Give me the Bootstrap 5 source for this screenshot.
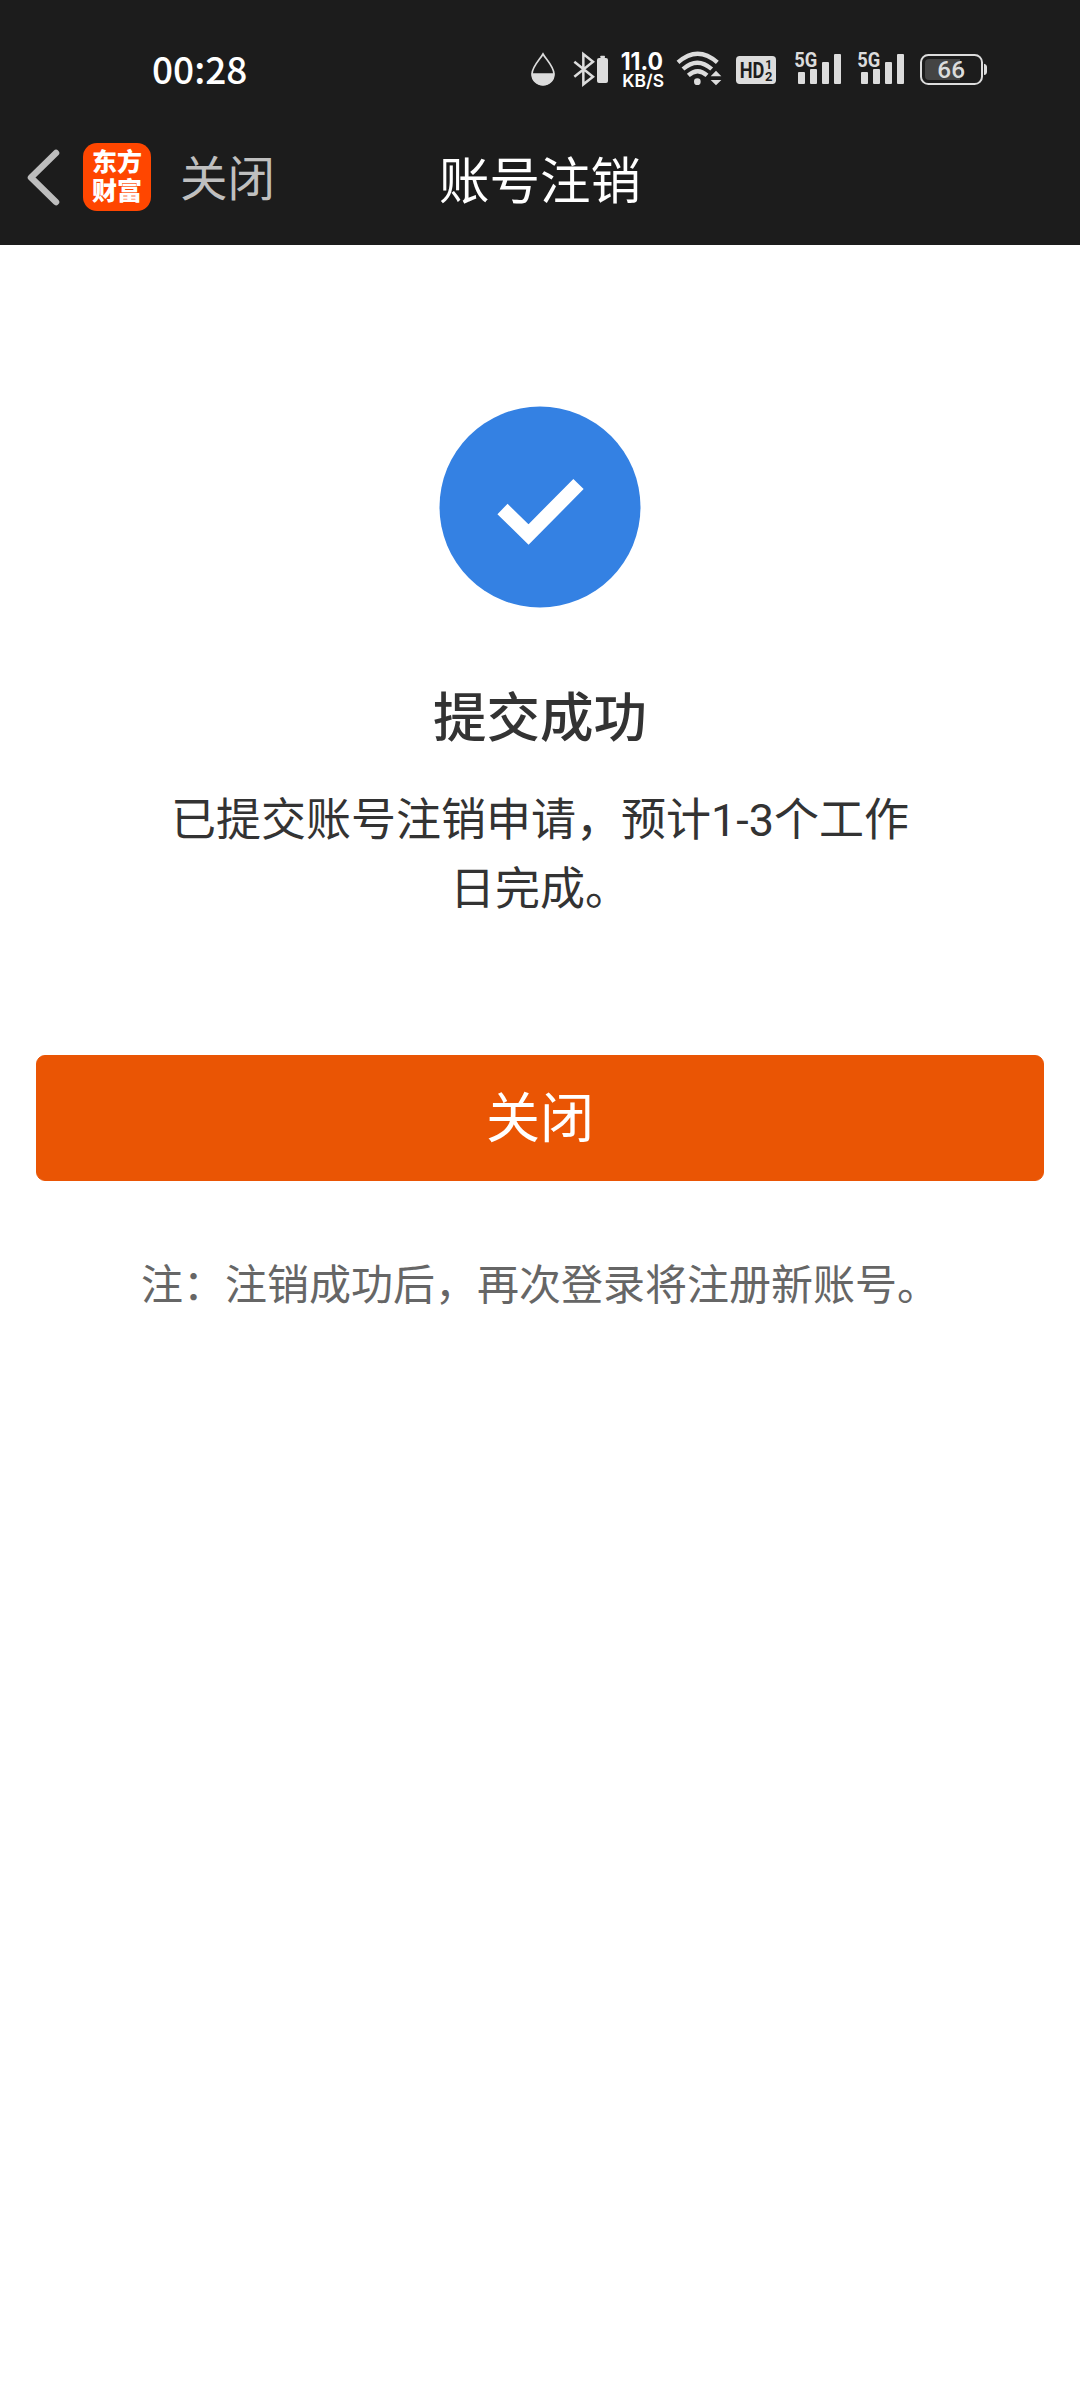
<!DOCTYPE html>
<html lang="zh-CN">
<head>
<meta charset="utf-8">
<meta name="viewport" content="width=device-width, initial-scale=1">
<title>账号注销</title>
<link href="https://cdn.jsdelivr.net/npm/bootstrap@5.3.0/dist/css/bootstrap.min.css" rel="stylesheet">
<style>
body{font-family:Roboto,"Noto Sans CJK SC",sans-serif;background:#fff;color:#333;min-height:2400px}
.top-area{background:#1c1c1c;height:245px}
.status-bar{height:140px;padding:40px 92px 40px 152px}
.clock{font:500 37px/60px "Noto Sans CJK SC",sans-serif;color:#fff;padding-bottom:5px}
.status-bar svg{height:60px;display:block;fill:#dcdcdc;font-family:Roboto,sans-serif}
.title-bar{height:105px}
.side{flex:1 1 0}
.back-icon{width:34px;height:58px;margin:8px 0 0 26px}
.app-logo{width:68px;height:68px;margin:3px 0 0 23px;border-radius:14px;background:#ff4600;color:#fff;font:900 25px/28.5px "Noto Sans CJK SC",sans-serif;padding-top:3px}
.close-link{font-size:47.5px;line-height:72px;margin:4px 0 0 29px;color:#bfbfbf;font-weight:400}
.page-name{font-size:50.5px;line-height:76px;margin-top:4px;color:#fff}
.result{padding:161px 36px 0}
.done-icon{width:202px;height:202px}
.result-title{font-size:53.5px;font-weight:500;line-height:80px;margin-top:71px}
.result-text{font-size:45px;line-height:69px;width:760px;margin-top:27px}
.btn-done{--bs-btn-bg:#ea5504;--bs-btn-color:#fff;--bs-btn-border-color:#ea5504;--bs-btn-hover-bg:#d44c02;--bs-btn-hover-color:#fff;height:126px;font-size:54px;line-height:80px;border-radius:9px;margin-top:131px;padding:10px 0 6px}
.hint{font-size:42px;line-height:64px;color:#666;margin-top:73px;white-space:nowrap}
</style>
</head>
<body>
<header class="top-area">
  <div class="status-bar d-flex align-items-center">
    <span class="clock me-auto">00:28</span>
    <!-- eye comfort drop -->
    <svg width="26" viewBox="60 0 78 180"><path d="M99 42C91 57 66 80 66 102a33 33 0 0 0 66 0C132 80 107 57 99 42Z" fill="none" stroke="#dcdcdc" stroke-width="5"/><path d="M65 100h68a34 36 0 0 1-68 0Z"/></svg>
    <!-- bluetooth with device charge -->
    <svg width="36" viewBox="189 0 108 180" style="margin-left:17px"><path d="M193 65 249 110 220 133V42l29 23L193 110" fill="none" stroke="#dcdcdc" stroke-width="7.500"/><rect x="271" y="47" width="14" height="7" rx="2"/><rect x="261" y="54" width="33" height="75" rx="6"/></svg>
    <!-- network speed -->
    <svg width="45" viewBox="330 0 135 180" style="margin-left:11px;fill:#fff;font-family:Inter,sans-serif"><text x="332" y="91" font-size="72" font-weight="700" textLength="127" lengthAdjust="spacingAndGlyphs">11.0</text><text x="337" y="142" font-size="53" font-weight="600" textLength="125" lengthAdjust="spacingAndGlyphs">KB/S</text></svg>
    <!-- wifi with traffic arrows -->
    <svg width="46" viewBox="498 0 138 180" style="margin-left:11px"><g fill="none" stroke="#dcdcdc" stroke-width="13"><path d="M504 67q59-52 118 0"/><path d="M519 87q43-38 86 0"/><path d="M535 106q28-25 56 0"/></g><circle cx="562" cy="125" r="10"/><path d="M602 109 618 92l16 17ZM602 120h32L618 136Z"/></svg>
    <svg width="42" viewBox="15 0 126 180" style="margin-left:13px"><rect x="18" y="48" width="120" height="84" rx="11"/><g fill="#1c1c1c" font-weight="700"><text x="29" y="113" font-size="66" textLength="74" lengthAdjust="spacingAndGlyphs">HD</text><text x="106" y="87" font-size="36">1</text><text x="105" y="122" font-size="39">2</text></g></svg>
    <svg width="48" viewBox="192 0 144 180" style="margin-left:17px"><text x="193" y="82" font-size="63" font-weight="700" textLength="69" lengthAdjust="spacingAndGlyphs">5G</text><rect x="204" y="96" width="21" height="36" rx="3"/><rect x="240" y="87" width="21" height="45" rx="3"/><rect x="276" y="66" width="21" height="66" rx="3"/><rect x="312" y="42" width="21" height="90" rx="3"/></svg>
    <svg width="48" viewBox="192 0 144 180" style="margin-left:15px"><text x="193" y="82" font-size="63" font-weight="700" textLength="69" lengthAdjust="spacingAndGlyphs">5G</text><rect x="204" y="96" width="21" height="36" rx="3"/><rect x="240" y="87" width="21" height="45" rx="3"/><rect x="276" y="66" width="21" height="66" rx="3"/><rect x="312" y="42" width="21" height="90" rx="3"/></svg>
    <!-- battery -->
    <svg width="69" viewBox="567 0 207 180" style="margin-left:14px"><rect x="573" y="45" width="183" height="87" rx="22" fill="none" stroke="#dcdcdc" stroke-width="6"/><path d="M597 57h93v63h-93a12 12 0 0 1-12-12V69a12 12 0 0 1 12-12Z" fill="#444"/><path d="M762 71q9 2 9 10v14q0 8-9 10Z"/><text x="622" y="113" font-size="71" font-weight="500" textLength="83" lengthAdjust="spacingAndGlyphs">66</text></svg>
  </div>
  <nav class="title-bar d-flex">
    <div class="side d-flex align-items-start">
      <svg class="back-icon" viewBox="0 0 34 58"><path d="M30 5 5 29.500 30 54" fill="none" stroke="#bdbdbd" stroke-width="6.500" stroke-linecap="round" stroke-linejoin="round"/></svg>
      <div class="app-logo text-center">东方<br>财富</div>
      <a class="close-link text-decoration-none" href="#">关闭</a>
    </div>
    <div class="page-name">账号注销</div>
    <div class="side"></div>
  </nav>
</header>
<main class="result d-flex flex-column align-items-center text-center">
  <svg class="done-icon" viewBox="0 0 202 202"><circle cx="101" cy="101" r="100.500" fill="#3481e3"/><path d="M63.500 103 89.500 128.500 139.500 78" fill="none" stroke="#fff" stroke-width="14.500"/></svg>
  <h1 class="result-title mb-0">提交成功</h1>
  <p class="result-text mb-0">已提交账号注销申请，预计1-3个工作日完成。</p>
  <button type="button" class="btn btn-done w-100">关闭</button>
  <p class="hint mb-0">注：注销成功后，再次登录将注册新账号。</p>
</main>
<script src="https://cdn.jsdelivr.net/npm/bootstrap@5.3.0/dist/js/bootstrap.bundle.min.js"></script>
</body>
</html>
